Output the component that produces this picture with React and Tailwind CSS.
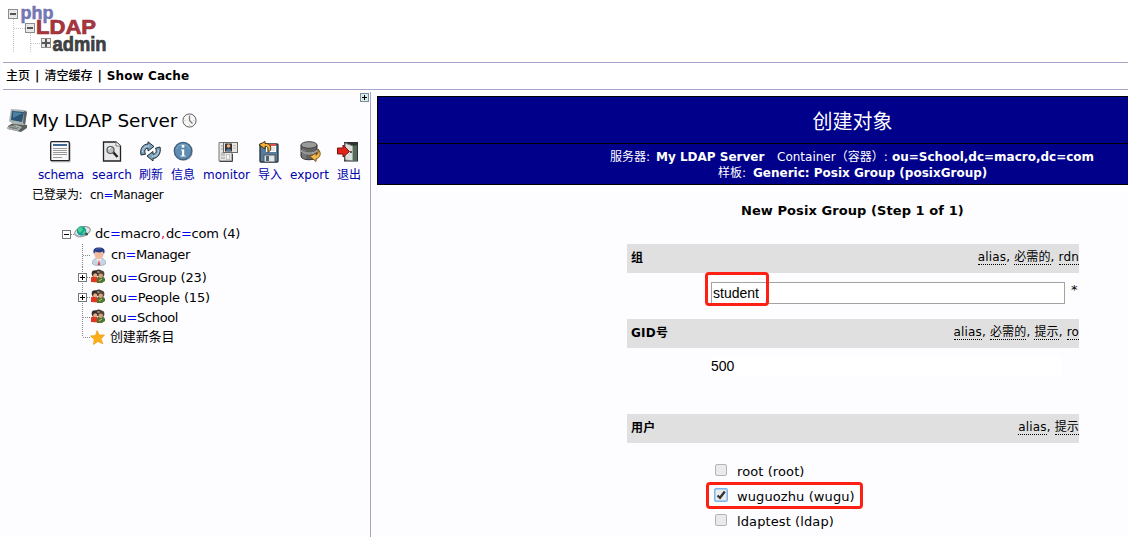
import React from "react";

function Logo() {
  return (
    <svg width="120" height="60" viewBox="0 0 120 60" className="block shrink-0">
      <g stroke="#c4c4c4" strokeDasharray="1 1" fill="none">
        <path d="M13.5 19V53M14 28.5H25M30.5 33V53M31 43.5H41" />
      </g>
      <g fill="#e9e9e9" stroke="#8c8c8c">
        <rect x="8.500" y="9.500" width="9" height="9" />
        <rect x="25.500" y="23.500" width="9" height="9" />
        <rect x="41.500" y="38.500" width="9" height="9" />
      </g>
      <path d="M10 14H16M27 28H33" stroke="#555" strokeWidth="2" />
      <path d="M42 43H50M46 39V47" stroke="#555" strokeWidth="2" />
      <g fontFamily="Liberation Sans, sans-serif" fontWeight="700">
        <text x="20.500" y="18.500" fontSize="18" textLength="33" lengthAdjust="spacingAndGlyphs" fill="#7378b8" stroke="#6a6eaa" strokeWidth=".5">php</text>
        <text x="36" y="34" fontSize="20" textLength="60" lengthAdjust="spacingAndGlyphs" fill="#a9353c" stroke="#98303a" strokeWidth=".7">LDAP</text>
        <text x="52.500" y="51" fontSize="20.500" textLength="54" lengthAdjust="spacingAndGlyphs" fill="#414345" stroke="#36383a" strokeWidth=".7">admin</text>
      </g>
    </svg>
  );
}

function Computer() {
  return (
    <svg width="22" height="25" viewBox="0 0 22 25">
      <path d="M1 18L6 15L20 17L20 20L14 24L1 21Z" fill="#5b605d" />
      <path d="M0 19L9 17L15 19L11 23L0 21Z" fill="#aeb5b2" />
      <path d="M2 20L9 18.500M5 21L12 19.500M3 19L11 21" stroke="#737b78" />
      <path d="M4 1L17 2L20 3L18 17L6 16L2 13Z" fill="#a9b4b2" />
      <path d="M5 3L17 4L15 14L4 12Z" fill="#295477" />
      <path d="M6 4L16 5L6 10Z" fill="#4d819f" />
      <path d="M17 3L20 4L18 17L16 15Z" fill="#59625f" />
    </svg>
  );
}

function Clock() {
  return (
    <svg width="15" height="15" viewBox="0 0 15 15">
      <circle cx="7.500" cy="7.500" r="6.600" fill="#f5f5f3" stroke="#606060" />
      <path d="M7.500 2.500V7.500L10.500 10.500" fill="none" stroke="#777" strokeWidth="1.200" />
      <path d="M2.500 7.500h1M11.500 7.500h1M7.500 11.500v1" stroke="#bbb" />
    </svg>
  );
}

const toolIcons = {
  schema: (
    <>
      <rect x="1" y="1.500" width="20" height="20" rx="1" fill="#ccc" />
      <rect x=".7" y=".7" width="18.600" height="19" rx="1" fill="#fafafa" stroke="#222" strokeWidth="1.300" />
      <path d="M3 4H17" stroke="#3f6992" strokeWidth="2" />
      <path d="M3 7.500H17M3 9.500H17M3 11.500H17M3 13.500H17M3 16.500H12" stroke="#999" />
    </>
  ),
  search: (
    <>
      <path d="M1.500 1H14L18.500 5V20H1.500Z" fill="#e8e8e8" stroke="#222" strokeWidth="1.300" />
      <path d="M14 1V5H18.500" fill="#fff" stroke="#777" />
      <path d="M11 11L15.500 16" stroke="#222" strokeWidth="2.500" />
      <circle cx="8.500" cy="9" r="3.500" fill="#b9c1c4" stroke="#555" strokeWidth="1.200" />
      <path d="M6.800 8.500a2 2 0 0 1 2-2" stroke="#fff" strokeWidth="1.200" fill="none" />
    </>
  ),
  refresh: (
    <g stroke="#1d2d3a" strokeLinejoin="round" fill="#80a4bc">
      <path d="M1 14C-.5 8 3 3 8 3V.8L14 5.500L8 10V7.200C5 7.400 4 10 5.500 13.200Z" />
      <path d="M20 6C21.500 12 18 17.200 13 17.500V20L7 15L13 10.500V13.200C16.200 13 17 10 15.500 7.200Z" />
      <path d="M2.500 11C2.500 7 5 5 9 5M18.500 9C18.500 13 16 15.200 12 15.200" fill="none" stroke="#c2d8e5" />
    </g>
  ),
  info: (
    <>
      <circle cx="10.500" cy="10.500" r="9.500" fill="#b8bcc0" />
      <circle cx="10" cy="10" r="8.700" fill="#5f8cb1" stroke="#3d6180" strokeWidth="1.300" />
      <path d="M3.500 8a7 7 0 0 1 13 0" fill="none" stroke="#87adc9" />
      <path d="M8 8.500H11.200V14.500H12.500V15.500H7.500V14.500H9V9.500H8Z" fill="#fff" />
      <rect x="8.700" y="4" width="2.600" height="2.600" fill="#fff" />
    </>
  ),
  monitor: (
    <>
      <path d="M2 1.500H15V20H2Z" fill="#e6e6e3" stroke="#777" />
      <path d="M2.500 20.500H15.500V13" fill="none" stroke="#444" />
      <path d="M4 5H6M4 8H6M4 12H8M4 14H8M4 17H8" stroke="#b5b5b5" strokeWidth="1.500" />
      <rect x="9.500" y="13.500" width="3" height="5" fill="#f6f6f4" stroke="#c4c4c4" />
      <rect x="6.500" y="1.500" width="14" height="10" fill="#e9e6df" stroke="#6d6a65" />
      <rect x="8" y="2.500" width="7" height="8" fill="#353432" />
      <circle cx="11.500" cy="5" r="1.800" fill="#edb187" />
      <path d="M9 10C9 7 14 7 14 10Z" fill="#4c79a1" />
      <path d="M16 4.500H19M16 7H19" stroke="#bbb" />
    </>
  ),
  import: (
    <>
      <rect x="2" y="3" width="18" height="18" rx="1" fill="#547da0" stroke="#262f39" strokeWidth="1.300" />
      <rect x="8" y="3" width="10" height="8" fill="#fff" />
      <path d="M8 4H18" stroke="#db524e" strokeWidth="2" />
      <path d="M9 7H17M9 9H17" stroke="#ccc" />
      <rect x="6" y="14" width="11" height="7" fill="#e5e5e5" stroke="#555" />
      <rect x="8" y="15" width="3" height="5" fill="#456681" />
      <path d="M10 11.500V8C10 6 9 5.300 7 5.300V8L1 3.700L7 .5V2.600C11 2 13.500 5 12.500 9Z" fill="#f3b43b" stroke="#49300d" />
    </>
  ),
  export: (
    <>
      <path d="M1 4V15C1 20 17 20 17 15V4Z" fill="#626262" stroke="#333" />
      <ellipse cx="9" cy="4" rx="8" ry="3.300" fill="#9b9b9b" stroke="#444" />
      <path d="M1 9C3 13 15 13 17 9M1 10C3 14 15 14 17 10" fill="none" stroke="#aaa" />
      <path d="M3 8V17M5 9V18" stroke="#898989" />
      <path d="M18 8C22 12 20 17 16 18V20.500L10 15.500L16 12V14.300C18 13 18.500 11 18 8Z" fill="#f0b749" stroke="#765019" />
    </>
  ),
  exit: (
    <>
      <rect x="7" y="1" width="14" height="19.500" fill="#2b3330" />
      <path d="M8 2L16 5V20L8 19Z" fill="#d9ded8" stroke="#777" />
      <path d="M16 5V20H20V4Z" fill="#526c57" />
      <circle cx="14" cy="11" r="1" fill="#333" />
      <path d="M.5 7H6V4L12.500 10.500L6 16V13H.5Z" fill="#df251a" stroke="#7d110c" />
    </>
  ),
};

const tools = [
  { label: "schema", icon: "schema", width: "w-[46px]", shift: "ml-[12px]", text: "tracking-[-0.15px]" },
  { label: "search", icon: "search", width: "w-[39px]", shift: "ml-[10px]", text: "" },
  { label: "刷新", icon: "refresh", width: "w-6", shift: "ml-[1px]", text: "" },
  { label: "信息", icon: "info", width: "w-6", shift: "ml-[2px]", text: "" },
  { label: "monitor", icon: "monitor", width: "w-[47px]", shift: "ml-[14px]", text: "" },
  { label: "导入", icon: "import", width: "w-6", shift: "ml-0", text: "" },
  { label: "export", icon: "export", width: "w-[39px]", shift: "ml-[10px]", text: "" },
  { label: "退出", icon: "exit", width: "w-6", shift: "ml-0", text: "" },
];

function Tool({ label, icon, width, shift, text }) {
  return (
    <div className={`${width} shrink-0`}>
      <svg width="22" height="22" viewBox="0 0 22 22" className={`${shift} block`}>{toolIcons[icon]}</svg>
      <div className={`mt-[3px] h-[18px] text-[12px] leading-[18px] text-[#0000aa] ${text}`}>{label}</div>
    </div>
  );
}

function Globe() {
  return (
    <svg width="17" height="14" viewBox="0 0 17 14">
      <ellipse cx="8.500" cy="6.500" rx="8" ry="4.500" transform="rotate(-18 8.500 6.500)" fill="#e3e6e7" stroke="#888" />
      <circle cx="7.500" cy="6" r="4.700" fill="#179c9b" />
      <path d="M4 3L8 2L9 5L6 8L4 6M9 7L11 5L11 8L8 10Z" fill="#49d18e" />
      <path d="M1 9C3 13 9 12 12 10" fill="none" stroke="#aaa" strokeWidth="1.300" />
      <circle cx="12.500" cy="9" r="1.500" fill="#444" />
    </svg>
  );
}

function Person() {
  return (
    <svg width="14" height="19" viewBox="0 0 14 19">
      <path d="M.5 17C0 12 4 11 7 11S14 12 13.500 17C11 19 3 19 .5 17Z" fill="#c8d3e5" stroke="#a9b4c7" />
      <path d="M4.500 11.500L7 18L9.500 11.500Z" fill="#f6f6f8" />
      <path d="M7 12L5.800 18H8.200Z" fill="#d43c3c" />
      <circle cx="7" cy="7.500" r="4.600" fill="#f2ba9c" />
      <path d="M2 7C0 2 3 .5 7 .5S14 2 12 7L10.500 4.500C8 6 5 5.500 3.500 4.500Z" fill="#263d86" />
      <path d="M4 2.500L9 1.500" stroke="#4b5f9e" />
    </svg>
  );
}

function People() {
  return (
    <svg width="14" height="14" viewBox="0 0 14 14">
      <path d="M0 13V8.500C1 7 5 7 7 9V13.500Z" fill="#df3820" />
      <path d="M6 14V9C8 7 13 7 14 10V12L11 14Z" fill="#527532" />
      <path d="M4 4C4 0 11-1 11 4L9 7H5Z" fill="#3b3430" />
      <circle cx="4" cy="4.500" r="3.300" fill="#322b29" />
      <circle cx="10" cy="5" r="3.400" fill="#51443b" />
      <circle cx="4.200" cy="6.200" r="2" fill="#e7ad83" />
      <circle cx="9.700" cy="6.800" r="2.200" fill="#d9a17b" />
      <path d="M6 3h2.500M8 12l3-2" stroke="#dfc29e" />
    </svg>
  );
}

function Star() {
  return (
    <svg width="15" height="15" viewBox="0 0 15 15">
      <path d="M7 .5L9.300 5L14.500 4.900L11 9L13 14L8 11.500L3.500 14.500L4.200 9.500L.5 6L5.500 5.400Z" fill="#fcae16" stroke="#e89608" strokeWidth=".6" />
    </svg>
  );
}

function Branch({ height, center, toggle, last }) {
  return (
    <svg width="14" height={height} viewBox={`0 0 14 ${height}`} className="shrink-0">
      <path d={`M5.500 0V${last ? center : height}M6 ${center + 0.5}H14`} stroke="#888" strokeDasharray="1 1" fill="none" />
      {toggle && (
        <>
          <rect x="1.500" y={center - 3.5} width="8" height="8" fill="#fff" stroke="#777" />
          <path d={`M3 ${center + 0.5}h5M5.500 ${center - 2}v5`} stroke="#000" />
        </>
      )}
    </svg>
  );
}

function Equal() {
  return <span className="text-[#0000ff]">=</span>;
}

function Sidebar() {
  return (
    <aside className="mt-[2px] h-[445px] w-[368px] shrink-0 border-r border-[#a5a5cb]">
      <div className="flex h-[16px] justify-end">
        <svg width="10" height="10" viewBox="0 0 10 10" className="mt-[1px]">
          <rect x=".5" y=".5" width="8" height="8" fill="#d8ebec" stroke="#78909a" />
          <path d="M2 4.500H7M4.500 2V7" stroke="#000" />
        </svg>
      </div>
      <div className="flex h-[25px] items-center">
        <div className="ml-[4px] w-[25px]"><Computer /></div>
        <h1 className="w-[150px] text-[18.500px] leading-[25px] tracking-[-0.15px]">My LDAP Server</h1>
        <Clock />
      </div>
      <div className="ml-[35px] mt-[8px] flex gap-2">
        {tools.map((tool) => <Tool key={tool.icon} {...tool} />)}
      </div>
      <div className="ml-[29px] mt-[1px] flex h-5 text-[12px] leading-5 tracking-[-0.35px]">
        <span className="w-[58px]">已登录为:</span><span>cn<Equal />Manager</span>
      </div>
      <div className="mt-[19px] text-[13px] tracking-[-0.15px]">
        <div className="ml-[59px] flex h-5 items-center">
          <svg width="12" height="20" viewBox="0 0 12 20"><rect x=".5" y="6.500" width="8" height="8" fill="#fff" stroke="#777" /><path d="M2 10.500H7" stroke="#000" /><path d="M9 10.500H12" stroke="#888" strokeDasharray="1 1" /></svg>
          <div className="-mt-[4px] mr-[4px]"><Globe /></div>
          <div className="flex tracking-[-0.25px]"><span className="w-[66px]">dc<Equal />macro</span><span className="w-[5px] text-[#ef0058]">,</span><span>dc<Equal />com (4)</span></div>
        </div>
        <div className="ml-[74px] flex h-[23px] items-center tracking-[-0.45px]">
          <Branch height={23} center={11} />
          <div className="ml-[1px] mt-[2px] w-[19px]"><Person /></div>
          <span className="-mt-[1px]">cn<Equal />Manager</span>
        </div>
        <div className="ml-[74px] flex h-5 items-center">
          <Branch height={20} center={10} toggle />
          <div className="-mt-[3px] w-5"><People /></div>
          <span className="pt-[1px]">ou<Equal />Group (23)</span>
        </div>
        <div className="ml-[74px] flex h-5 items-center">
          <Branch height={20} center={10} toggle />
          <div className="-mt-[3px] w-5"><People /></div>
          <span className="pt-[1px]">ou<Equal />People (15)</span>
        </div>
        <div className="ml-[74px] flex h-5 items-center tracking-[-0.35px]">
          <Branch height={20} center={10} />
          <div className="-mt-[3px] w-5"><People /></div>
          <span className="pt-[1px]">ou<Equal />School</span>
        </div>
        <div className="ml-[74px] flex h-5 items-center">
          <Branch height={20} center={10} last />
          <div className="-ml-px mr-px mt-px w-[19px]"><Star /></div>
          <span>创建新条目</span>
        </div>
      </div>
    </aside>
  );
}

function FieldHeader({ title, hints }) {
  return (
    <div className="flex h-[29px] items-center justify-between bg-[#e0e0e0] pl-[4px] text-[12px]">
      <b className="-mt-[2px] tracking-[0.2px]">{title}</b>
      <div className="-mt-[3px] flex">
        {hints.map((hint, index) => (
          <React.Fragment key={hint}>
            <span className="h-[16px] border-b border-dotted border-black leading-[17px] tracking-[0.15px]">{hint}</span>
            {index < hints.length - 1 && <span className="w-[8px] leading-[17px]">,</span>}
          </React.Fragment>
        ))}
      </div>
    </div>
  );
}

function Member({ label, checked }) {
  return (
    <div className="flex h-[25px] items-center text-[13px] tracking-[0.1px]">
      <svg width="14" height="14" viewBox="0 0 14 14" className="-mt-[3px] ml-[87px] mr-[9px]">
        <rect x={checked ? 0.75 : 1.5} y={checked ? 0.75 : 1.5} width={checked ? 12.5 : 11} height={checked ? 12.5 : 11} rx="1.500" fill="#eaeaea" stroke={checked ? "#79b5ec" : "#b4b4b4"} strokeWidth={checked ? 1.5 : 1} />
        {checked && <path d="M3.500 7.500L6 9.800L10.800 3.500" fill="none" stroke="#333" strokeWidth="2.300" />}
      </svg>
      <span>{label}</span>
    </div>
  );
}

function Main() {
  return (
    <main className="ml-[6px] mt-[6px] w-[751px] overflow-hidden">
      <section className="w-[951px] border border-black bg-[#00008a] text-white">
        <div className="flex h-[47px] items-center justify-center border-b border-black text-[20px]">
          <h2 className="w-[80px] pt-[3px]">创建对象</h2>
        </div>
        <div className="h-[40px] pt-[5px] text-[12px] leading-4">
          <div className="ml-[232px] flex">
            <span className="w-[46px]">服务器:</span>
            <b className="w-[121px]">My LDAP Server</b>
            <span className="w-[115px]">Container（容器）:</span>
            <b>ou=School,dc=macro,dc=com</b>
          </div>
          <div className="ml-[340px] flex">
            <span className="w-[35px]">样板:</span>
            <b>Generic: Posix Group (posixGroup)</b>
          </div>
        </div>
      </section>
      <h3 className="ml-[364px] mt-[16px] h-5 text-[13px] font-bold leading-5 tracking-[0.07px]">New Posix Group (Step 1 of 1)</h3>
      <form className="ml-[250px] mt-[23px] w-[452px]">
        <FieldHeader title="组" hints={["alias", "必需的", "rdn"]} />
        <div className="relative flex h-[46px] pl-[84px] pt-[9px]">
          <div className="h-[22px] w-[354px] border border-[#a3a3a3] bg-white pl-[1px] font-['Liberation_Sans',sans-serif] text-[14px] leading-[20px]">student</div>
          <span className="ml-[6px] text-[13px] leading-[16px]">*</span>
          <div className="absolute -top-[1px] left-[78px] h-[34px] w-[64px] rounded-[4px] border-3 border-[#ff2015]" />
        </div>
        <FieldHeader title="GID号" hints={["alias", "必需的", "提示", "ro"]} />
        <div className="h-[66px] pl-[83px] pt-[9px]">
          <div className="h-[19px] w-[351px] bg-white pl-px font-['Liberation_Sans',sans-serif] text-[14px] leading-[19px]">500</div>
        </div>
        <FieldHeader title="用户" hints={["alias", "提示"]} />
        <div className="relative pt-[16px]">
          <Member label="root (root)" />
          <Member label="wuguozhu (wugu)" checked />
          <Member label="ldaptest (ldap)" />
          <div className="absolute left-[79px] top-[39px] h-[27px] w-[157px] rounded-[4px] border-3 border-[#ff2015]" />
        </div>
      </form>
    </main>
  );
}

export default function App() {
  return (
    <div className="h-[537px] w-[1128px] overflow-hidden whitespace-nowrap bg-[#fdfdff] font-['DejaVu_Sans','Noto_Sans_CJK_SC',sans-serif] text-black">
      <header className="h-[62px] bg-white"><Logo /></header>
      <nav className="ml-[3px] flex h-[28px] items-center gap-[5px] border-y border-[#a5a5cb] bg-white pl-[3px] text-[12px] font-bold">
        <span className="font-medium">主页</span><span>|</span><span className="font-medium">清空缓存</span><span>|</span><span className="tracking-[0.1px]">Show Cache</span>
      </nav>
      <div className="ml-[3px] flex items-start"><Sidebar /><Main /></div>
    </div>
  );
}
